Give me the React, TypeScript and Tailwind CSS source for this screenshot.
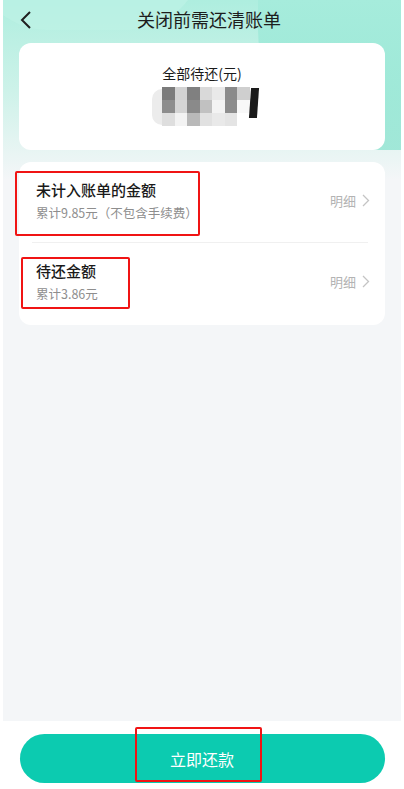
import React from 'react';

const mosaic = [
  ['#7b7b7b', '#d2d2d2', '#808080', '#d9d9d9', '#e9e9e9', '#8b8b8b', '#cfcfcf'],
  ['#8d8d8d', '#d5d5d5', '#8a8a8a', '#c1c1c1', '#f3f3f3', '#8d8d8d', '#f8f8f8'],
  ['#dedede', '#f3f3f3', '#b9b9b9', '#e1e1e1', '#e9e9e9', '#e4e4e4', '#ffffff'],
];

const ChevronRight = () => (
  <svg width="8" height="13" viewBox="0 0 8 13" fill="none">
    <path d="M1 1l5.5 5.5L1 12" stroke="#c4c4c4" strokeWidth="1.3" />
  </svg>
);

const Row = ({ title, sub }: { title: string; sub: string }) => (
  <div className="flex items-center justify-between">
    <div className="flex flex-col">
      <span className="text-[15px] leading-[20px] font-medium text-[#1a1a1a]">{title}</span>
      <span className="mt-[5px] text-[12.5px] leading-[16px] text-[#8e8e8e]">{sub}</span>
    </div>
    <div className="flex items-center gap-[6px] text-[13px] text-[#b3b3b3]">
      明细 <ChevronRight />
    </div>
  </div>
);

export default function App() {
  return (
    <div
      className="w-[404px] h-[789px] bg-white px-[3px] flex flex-col"
      style={{ fontFamily: '"Noto Sans CJK SC", "Noto Sans", sans-serif' }}
    >
      <div className="relative flex-1 overflow-hidden bg-[#f4f6f8]">
        {/* top decoration */}
        <div className="absolute left-0 right-0 top-0 h-[180px] bg-gradient-to-b from-[#aeeedf] via-[#cdf2e9] to-[#f4f6f8]" />
        <div className="absolute -left-[30px] -top-[120px] w-[230px] h-[150px] rounded-full bg-[#bdf2e6]/70" />
        <div className="absolute left-[255px] top-[0px] w-[260px] h-[150px] rounded-bl-[120px] bg-gradient-to-b from-[#a6ecdc] to-[#8fe4d1]/80" />

        <div className="relative flex flex-col">
          {/* header */}
          <div className="h-[40px] flex items-center justify-center relative">
            <svg className="absolute left-[16px] top-[10px]" width="14" height="20" viewBox="0 0 14 20" fill="none">
              <path d="M11 2L3 10l8 8" stroke="#1f1f1f" strokeWidth="2" />
            </svg>
            <span className="text-[18px] text-[#1d1d1d] ml-[14px] -mt-[2px]">关闭前需还清账单</span>
          </div>

          {/* total card */}
          <div className="mx-[16px] mt-[3px] h-[107px] rounded-[12px] bg-white flex flex-col items-center pt-[20px]">
            <span className="text-[14px] leading-[20px] text-[#1a1a1a]">全部待还(元)</span>
            <div className="relative mt-[2px] ml-[6px] flex">
              <div className="w-[10px] h-[36px] mt-[4px] rounded-l-full bg-[#ececec]" />
              <div className="flex flex-col pt-[2px]">
                {mosaic.map((r, i) => (
                  <div key={i} className="flex">
                    {r.map((c, j) => (
                      <div key={j} className="w-[12.5px] h-[13px]" style={{ background: c }} />
                    ))}
                  </div>
                ))}
              </div>
              <div className="w-[8px] h-[30px] mt-[3px] bg-[#1a1a1a] skew-x-[-4deg]" />
            </div>
          </div>

          {/* detail card */}
          <div className="mx-[16px] mt-[12px] rounded-[12px] bg-white px-[17px]">
            <div className="pt-[18px] pb-[21px] mr-[-2px]">
              <Row title="未计入账单的金额" sub="累计9.85元（不包含手续费）" />
            </div>
            <div className="h-px bg-[#f0f0f0] ml-[-4px]" />
            <div className="pt-[18px] pb-[23px] mr-[-2px]">
              <Row title="待还金额" sub="累计3.86元" />
            </div>
          </div>
        </div>

        {/* annotation boxes */}
        <div className="absolute left-[12px] top-[171px] w-[185px] h-[65px] border-2 border-[#f01414] rounded-[2px]" />
        <div className="absolute left-[18px] top-[257px] w-[109px] h-[52px] border-2 border-[#f01414] rounded-[2px]" />
      </div>

      {/* footer */}
      <div className="h-[68px] bg-white flex items-start justify-center pt-[13px] relative">
        <button className="w-[365px] h-[49px] rounded-full bg-[#0ccbb0] text-white text-[16px]">立即还款</button>
        <div className="absolute left-[132px] top-[6px] w-[127px] h-[55px] border-2 border-[#f01414] rounded-[2px]" />
      </div>
    </div>
  );
}
